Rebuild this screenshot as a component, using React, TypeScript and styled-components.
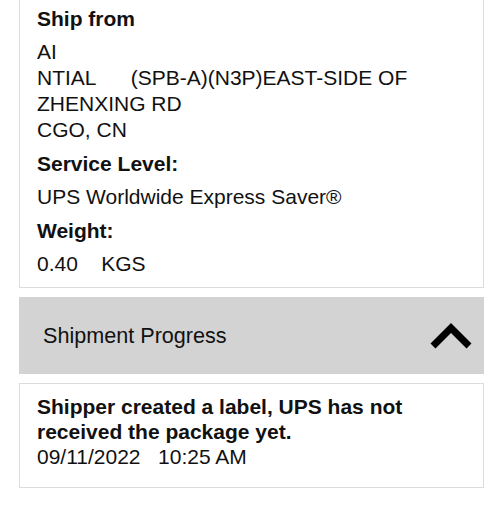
import React from "react";
import styled, { createGlobalStyle } from "styled-components";

const GlobalStyle = createGlobalStyle`
  html, body {
    margin: 0;
    padding: 0;
    background: #ffffff;
  }
  body {
    font-family: "Liberation Sans", Arial, Helvetica, sans-serif;
    color: #111111;
    overflow: hidden;
  }
`;

const Page = styled.div`
  width: 504px;
  padding: 0 20px 0 19px;
  box-sizing: border-box;
  display: flex;
  flex-direction: column;
  gap: 9px;
`;

const DetailCard = styled.section`
  margin-top: -12px;
  border: 1px solid #dcdcdc;
  padding: 17px 17px 10px;
  display: flex;
  flex-direction: column;
`;

const Label = styled.div`
  font-size: 21px;
  line-height: 26px;
  font-weight: 700;
  margin-bottom: 7px;
`;

const Value = styled.div`
  font-size: 21px;
  line-height: 26px;
  white-space: pre-wrap;
  margin-bottom: ${(p: { $last?: boolean }) => (p.$last ? "0" : "8px")};
`;

const ProgressHeader = styled.button`
  all: unset;
  box-sizing: border-box;
  height: 77px;
  background: #d3d3d3;
  display: flex;
  align-items: center;
  justify-content: space-between;
  padding: 0 11px 0 24px;
  font-size: 21.6px;
  color: #111111;
`;

const Chevron = styled.svg`
  width: 44px;
  height: 30px;
  display: block;
`;

const EventCard = styled.div`
  border: 1px solid #dcdcdc;
  padding: 10px 17px 18px;
  font-size: 21px;
  line-height: 25px;
`;

const EventTitle = styled.div`
  font-weight: 700;
`;

const EventTime = styled.div`
  white-space: pre;
`;

export default function App() {
  return (
    <>
      <GlobalStyle />
      <Page>
        <DetailCard>
          <Label>Ship from</Label>
          <Value>
            {"AI\nNTIAL      (SPB-A)(N3P)EAST-SIDE OF\nZHENXING RD\nCGO, CN"}
          </Value>
          <Label>Service Level:</Label>
          <Value>UPS Worldwide Express Saver®</Value>
          <Label>Weight:</Label>
          <Value $last>{"0.40    KGS"}</Value>
        </DetailCard>

        <ProgressHeader>
          <span>Shipment Progress</span>
          <Chevron viewBox="0 0 44 30">
            <polyline
              points="4,25 22,7 40,25"
              fill="none"
              stroke="#000"
              strokeWidth="7"
              strokeLinecap="butt"
              strokeLinejoin="miter"
            />
          </Chevron>
        </ProgressHeader>

        <EventCard>
          <EventTitle>Shipper created a label, UPS has not received the package yet.</EventTitle>
          <EventTime>{"09/11/2022   10:25 AM"}</EventTime>
        </EventCard>
      </Page>
    </>
  );
}
